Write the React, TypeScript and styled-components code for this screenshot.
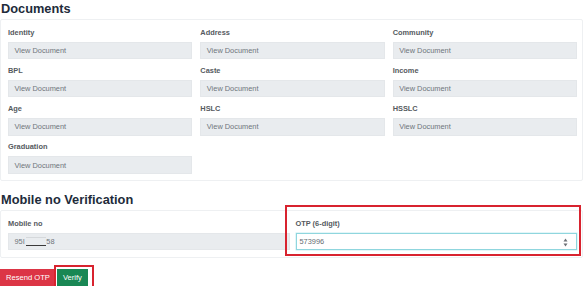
import styled, { createGlobalStyle } from "styled-components";

const GlobalStyle = createGlobalStyle`
    body{
        margin:0;
        background:#fff;
        font-family:"Liberation Sans", Arial, sans-serif;
    }
`;

const Page = styled.div`
    width:583px;
`,

SectionTitle = styled.h4<{ $top?: number }>`
    margin:${p => p.$top ?? 1}px 0 2px 1px;
    font-size:12.8px;
    line-height:16px;
    font-weight:700;
    color:#212b3a;
`,

Card = styled.div`
    border:1px solid #eef0f2;
    border-radius:2px;
    padding:7.5px 5px 6.5px 7px;
`,

Grid = styled.div<{ $cols: number; $gap: number }>`
    display:grid;
    grid-template-columns:repeat(${p => p.$cols}, 1fr);
    column-gap:${p => p.$gap}px;
    row-gap:6.8px;
`,

Field = styled.div`
    position:relative;
    display:flex;
    flex-direction:column;
`,

Label = styled.label`
    font-size:7.4px;
    line-height:10px;
    font-weight:700;
    color:#555a60;
    margin-bottom:4px;
`,

ReadOnlyBox = styled.div`
    height:17.5px;
    box-sizing:border-box;
    display:flex;
    align-items:center;
    padding-left:5.5px;
    background:#e9ecef;
    border:1px solid #e4e7ea;
    font-size:7.4px;
    color:#6f757b;
`,

Masked = styled.span`
    display:inline-block;
    width:20px;
    height:7px;
    border-top:1px solid #d5d8db;
    border-bottom:1px solid #3a3a3a;
    margin:0 0.5px 0 1px;
    vertical-align:-2px;
`,

OtpBox = styled.div`
    position:relative;
    height:17.5px;
    box-sizing:border-box;
    display:flex;
    align-items:center;
    padding-left:3px;
    background:#fff;
    border:1px solid #8fd6de;
    box-shadow:0 0 0 0.5px #c7eef2;
    font-size:7.4px;
    color:#666b70;
`,

Spinner = styled.svg`
    position:absolute;
    right:8px;
    top:4px;
`,

Highlight = styled.div<{ $l: number; $t: number; $w: number; $h: number }>`
    position:absolute;
    left:${p => p.$l}px;
    top:${p => p.$t}px;
    width:${p => p.$w}px;
    height:${p => p.$h}px;
    border:2px solid #d8232f;
    box-sizing:border-box;
    pointer-events:none;
`,

Actions = styled.div`
    display:flex;
    align-items:flex-start;
    gap:1px;
    margin-top:11.5px;
`,

ButtonWrap = styled.div`
    position:relative;
`,

Button = styled.button<{ $variant: "danger" | "success" }>`
    display:block;
    height:17px;
    padding:0 6px;
    margin:0;
    border:none;
    border-radius:0;
    font-family:"Liberation Sans", Arial, sans-serif;
    font-size:7.6px;
    color:#fff;
    background:${p => p.$variant == "danger" ? "#dc3545" : "#198754"};
    cursor:pointer;
`;

const documents = [
    "Identity", "Address", "Community",
    "BPL", "Caste", "Income",
    "Age", "HSLC", "HSSLC",
    "Graduation",
];

const App = () => {
    return(
        <Page>
            <GlobalStyle />
            <SectionTitle>Documents</SectionTitle>
            <Card>
                <Grid $cols={3} $gap={8}>
                    {
                        documents.map((name, key) => (
                            <Field key={key}>
                                <Label>{name}</Label>
                                <ReadOnlyBox>View Document</ReadOnlyBox>
                            </Field>
                        ))
                    }
                </Grid>
            </Card>

            <SectionTitle $top={11}>Mobile no Verification</SectionTitle>
            <Card>
                <Grid $cols={2} $gap={6}>
                    <Field>
                        <Label>Mobile no</Label>
                        <ReadOnlyBox>95I<Masked />58</ReadOnlyBox>
                    </Field>
                    <Field>
                        <Label>OTP (6-digit)</Label>
                        <OtpBox>
                            573996
                            <Spinner width="5" height="9" viewBox="0 0 5 9">
                                <path d="M2.5 0.5 L4.5 3.5 L0.5 3.5 Z" fill="#6b6f74" />
                                <path d="M0.5 5.5 L4.5 5.5 L2.5 8.5 Z" fill="#6b6f74" />
                            </Spinner>
                        </OtpBox>
                        <Highlight $l={-10.5} $t={-13.5} $w={295.5} $h={50.5} />
                    </Field>
                </Grid>
            </Card>

            <Actions>
                <Button $variant="danger">Resend OTP</Button>
                <ButtonWrap>
                    <Button $variant="success">Verify</Button>
                    <Highlight $l={-2.5} $t={-4} $w={40} $h={40} />
                </ButtonWrap>
            </Actions>
        </Page>
    )
}

export default App;
